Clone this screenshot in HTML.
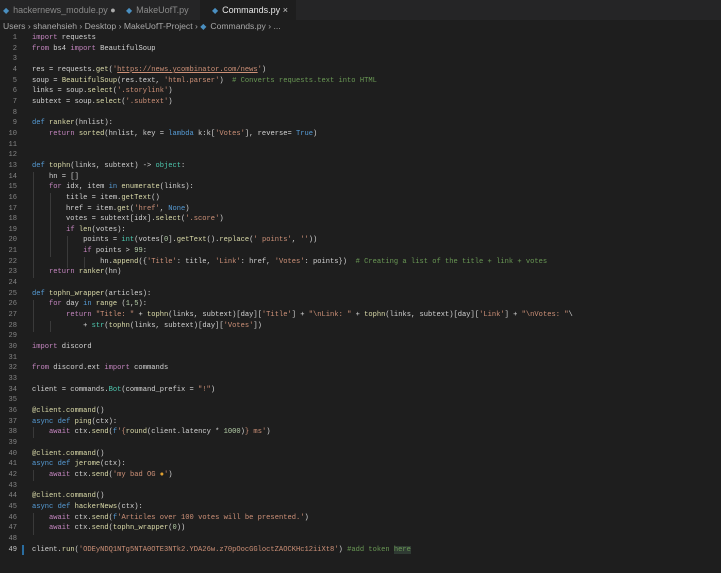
<!DOCTYPE html>
<html><head><meta charset="utf-8"><style>
*{margin:0;padding:0;box-sizing:border-box}
body{width:721px;height:573px;background:#1e1e1e;overflow:hidden;font-family:"Liberation Sans",sans-serif;position:relative}
.tabs{position:absolute;left:0;top:0;width:721px;height:20px;background:#252526}
.tab{position:absolute;top:0;height:20px;font-size:9px;line-height:20px;color:#8a8a8a;white-space:nowrap}
.tab.act{background:#1e1e1e;color:#e6e6e6}
.ic{color:#4a8fc0;font-size:8px;margin-right:4px}
.bc{position:absolute;left:3px;top:20px;height:13px;font-size:8.6px;line-height:13px;color:#a8a8a8;white-space:nowrap}
pre{position:absolute;top:33px;left:0;font-family:"Liberation Mono",monospace;font-size:7.1px;line-height:10.65px;color:#d4d4d4}
.ln{position:absolute;top:33px;left:0;width:17px;text-align:right;font-family:"Liberation Mono",monospace;font-size:7.1px;line-height:10.65px;color:#858585;white-space:pre}
.code{left:32px}
.k{color:#c586c0}.b{color:#569cd6}.f{color:#dcdcaa}.s{color:#ce9178}.c{color:#6a9955}.n{color:#b5cea8}.t{color:#4ec9b0}.v{color:#9cdcfe}
.u{text-decoration:underline}
.g{position:absolute;width:1px;background:#3a3a3a}
</style></head><body>
<div class="tabs">
<div class="tab" style="left:0;width:118px;padding-left:3px"><span class="ic">◆</span>hackernews_module.py <span style="color:#aaa">●</span></div>
<div class="tab" style="left:118px;width:80px;padding-left:8px"><span class="ic">◆</span>MakeUofT.py</div>
<div class="tab act" style="left:200px;width:96px;padding-left:12px"><span class="ic">◆</span>Commands.py <span style="color:#ccc">×</span></div>
</div>
<div class="bc">Users › shanehsieh › Desktop › MakeUofT-Project › <span class="ic">◆</span>Commands.py › ...</div>
<div class="g" style="left:33px;top:172px;height:106px"></div>
<div class="g" style="left:50px;top:193px;height:64px"></div>
<div class="g" style="left:67px;top:236px;height:32px"></div>
<div class="g" style="left:84px;top:257px;height:11px"></div>
<div class="g" style="left:33px;top:300px;height:32px"></div>
<div class="g" style="left:50px;top:321px;height:11px"></div>
<div class="g" style="left:33px;top:427px;height:11px"></div>
<div class="g" style="left:33px;top:470px;height:11px"></div>
<div class="g" style="left:33px;top:513px;height:22px"></div>
<pre class="ln">1
2
3
4
5
6
7
8
9
10
11
12
13
14
15
16
17
18
19
20
21
22
23
24
25
26
27
28
29
30
31
32
33
34
35
36
37
38
39
40
41
42
43
44
45
46
47
48
<span style="color:#c6c6c6">49</span></pre>
<div style="position:absolute;left:22px;top:545px;width:2px;height:10px;background:#2a6da0"></div>
<pre class="code"><span class="k">import</span> requests
<span class="k">from</span> bs4 <span class="k">import</span> BeautifulSoup

res = requests.<span class="f">get</span>(<span class="s">'<span class="u">https://news.ycombinator.com/news</span>'</span>)
soup = <span class="f">BeautifulSoup</span>(res.text, <span class="s">'html.parser'</span>)  <span class="c"># Converts requests.text into HTML</span>
links = soup.<span class="f">select</span>(<span class="s">'.storylink'</span>)
subtext = soup.<span class="f">select</span>(<span class="s">'.subtext'</span>)

<span class="b">def</span> <span class="f">ranker</span>(hnlist):
    <span class="k">return</span> <span class="f">sorted</span>(hnlist, key = <span class="b">lambda</span> k:k[<span class="s">'Votes'</span>], reverse= <span class="b">True</span>)


<span class="b">def</span> <span class="f">tophn</span>(links, subtext) -&gt; <span class="t">object</span>:
    hn = []
    <span class="k">for</span> idx, item <span class="b">in</span> <span class="f">enumerate</span>(links):
        title = item.<span class="f">getText</span>()
        href = item.<span class="f">get</span>(<span class="s">'href'</span>, <span class="b">None</span>)
        votes = subtext[idx].<span class="f">select</span>(<span class="s">'.score'</span>)
        <span class="k">if</span> <span class="f">len</span>(votes):
            points = <span class="t">int</span>(votes[<span class="n">0</span>].<span class="f">getText</span>().<span class="f">replace</span>(<span class="s">' points'</span>, <span class="s">''</span>))
            <span class="k">if</span> points &gt; <span class="n">99</span>:
                hn.<span class="f">append</span>({<span class="s">'Title'</span>: title, <span class="s">'Link'</span>: href, <span class="s">'Votes'</span>: points})  <span class="c"># Creating a list of the title + link + votes</span>
    <span class="k">return</span> <span class="f">ranker</span>(hn)

<span class="b">def</span> <span class="f">tophn_wrapper</span>(articles):
    <span class="k">for</span> day <span class="b">in</span> <span class="f">range</span> (<span class="n">1</span>,<span class="n">5</span>):
        <span class="k">return</span> <span class="s">"Title: "</span> + <span class="f">tophn</span>(links, subtext)[day][<span class="s">'Title'</span>] + <span class="s">"\nLink: "</span> + <span class="f">tophn</span>(links, subtext)[day][<span class="s">'Link'</span>] + <span class="s">"\nVotes: "</span>\
            + <span class="t">str</span>(<span class="f">tophn</span>(links, subtext)[day][<span class="s">'Votes'</span>])

<span class="k">import</span> discord

<span class="k">from</span> discord.ext <span class="k">import</span> commands

client = commands.<span class="t">Bot</span>(command_prefix = <span class="s">"!"</span>)

<span class="f">@client.command</span>()
<span class="b">async</span> <span class="b">def</span> <span class="f">ping</span>(ctx):
    <span class="k">await</span> ctx.<span class="f">send</span>(<span class="b">f</span><span class="s">'{</span><span class="f">round</span>(client.latency * <span class="n">1000</span>)<span class="s">} ms'</span>)

<span class="f">@client.command</span>()
<span class="b">async</span> <span class="b">def</span> <span class="f">jerome</span>(ctx):
    <span class="k">await</span> ctx.<span class="f">send</span>(<span class="s">'my bad OG <span style="color:#e0a030">●</span>'</span>)

<span class="f">@client.command</span>()
<span class="b">async</span> <span class="b">def</span> <span class="f">hackerNews</span>(ctx):
    <span class="k">await</span> ctx.<span class="f">send</span>(<span class="b">f</span><span class="s">'Articles over 100 votes will be presented.'</span>)
    <span class="k">await</span> ctx.<span class="f">send</span>(<span class="f">tophn_wrapper</span>(<span class="n">0</span>))

client.<span class="f">run</span>(<span class="s">'ODEyNDQ1NTg5NTA0OTE3NTk2.YDA26w.z70pOocGGloctZAOCKHc12iiXt8'</span>) <span class="c">#add token <span style="background:#2f3a33">here</span></span></pre>
</body></html>
